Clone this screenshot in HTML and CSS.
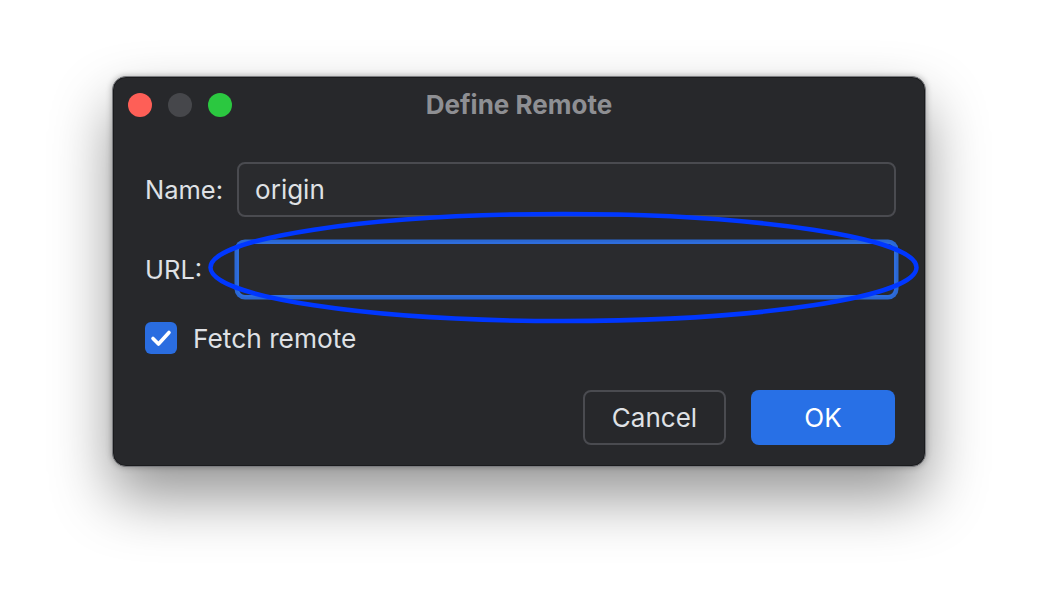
FILE: index.html
```html
<!DOCTYPE html>
<html>
<head>
<meta charset="utf-8">
<link rel="stylesheet" href="styles.css">
</head>
<body>
<div class="page">
  <div class="window">
    <div class="titlebar">
      <div class="lights">
        <span class="light red"></span>
        <span class="light gray"></span>
        <span class="light green"></span>
      </div>
      <div class="title">Define Remote</div>
      <div></div>
    </div>
    <div class="content">
      <div class="form">
        <label class="label">Name:</label>
        <div class="input">origin</div>
        <label class="label">URL:</label>
        <div class="input focused"></div>
      </div>
      <div class="check-row">
        <span class="checkbox">
          <svg width="32" height="32" viewBox="0 0 32 32"><polyline points="8,16.5 13.5,22 24,10.5" fill="none" stroke="#ffffff" stroke-width="3.6" stroke-linecap="round" stroke-linejoin="round"/></svg>
        </span>
        <span class="check-label">Fetch remote</span>
      </div>
      <div class="buttons">
        <button class="btn cancel">Cancel</button>
        <button class="btn ok">OK</button>
      </div>
    </div>
  </div>
  <svg class="annotation" width="1038" height="616" viewBox="0 0 1038 616">
    <ellipse cx="563.5" cy="267.5" rx="353" ry="53.5" fill="none" stroke="#0037ff" stroke-width="4.5"/>
  </svg>
</div>
</body>
</html>
```
FILE: styles.css
```css
* { box-sizing: border-box; }
html, body { margin: 0; padding: 0; }
body {
  background: #ffffff;
  font-family: Inter, "Noto Sans", "Liberation Sans", sans-serif;
  width: 1038px;
  height: 616px;
  overflow: hidden;
}
.page {
  position: relative;
  width: 1038px;
  height: 616px;
  padding-top: 76px;
  display: flex;
  justify-content: center;
  align-items: flex-start;
}
.window {
  width: 814px;
  height: 391px;
  background: #27282b;
  border-radius: 14px;
  border: 1px solid #7b7c80;
  box-shadow: inset 0 0 0 1px #1a1b1d, 0 30px 60px rgba(0,0,0,0.42), 0 0 6px rgba(0,0,0,0.28);
  display: flex;
  flex-direction: column;
}
.titlebar {
  height: 55px;
  display: grid;
  grid-template-columns: 1fr auto 1fr;
  align-items: center;
  padding: 0 15px;
}
.lights { display: flex; gap: 16px; }
.light { width: 24px; height: 24px; border-radius: 50%; display: block; }
.red { background: #fe5f57; }
.gray { background: #46474b; }
.green { background: #2bc840; }
.title {
  font-size: 26px;
  font-weight: 700;
  color: #8e8f93;
}
.content {
  padding: 30px 29px 0 32px;
  display: flex;
  flex-direction: column;
}
.form {
  display: grid;
  grid-template-columns: auto 1fr;
  column-gap: 14px;
  row-gap: 25px;
  align-items: center;
}
.label {
  font-size: 25.5px;
  color: #dfe1e5;
}
.input {
  height: 55px;
  border: 2px solid #4a4b50;
  border-radius: 8px;
  background: #2a2b2e;
  font-size: 26px;
  color: #dfe1e5;
  padding: 0 16px;
  display: flex;
  align-items: center;
}
.input.focused {
  border: 2px solid #2e6ddc;
  box-shadow: 0 0 0 2.5px #2b68d4;
}
.check-row {
  margin-top: 25px;
  display: flex;
  align-items: center;
  gap: 16px;
}
.checkbox {
  width: 32px;
  height: 32px;
  border-radius: 6px;
  background: #2a6de0;
  display: block;
}
.checkbox svg { display: block; }
.check-label {
  font-size: 26.3px;
  color: #dfe1e5;
}
.buttons {
  margin-top: 36px;
  display: flex;
  justify-content: flex-end;
  gap: 25px;
  padding-right: 1px;
}
.btn {
  height: 55px;
  border-radius: 8px;
  font-family: inherit;
  font-size: 26px;
  padding: 0;
}
.cancel {
  width: 143px;
  background: #27282b;
  border: 2px solid #4a4b50;
  color: #dfe1e5;
}
.ok {
  width: 144px;
  background: #2870e6;
  border: none;
  color: #ffffff;
}
.annotation {
  position: absolute;
  left: 0;
  top: 0;
  pointer-events: none;
}
```
